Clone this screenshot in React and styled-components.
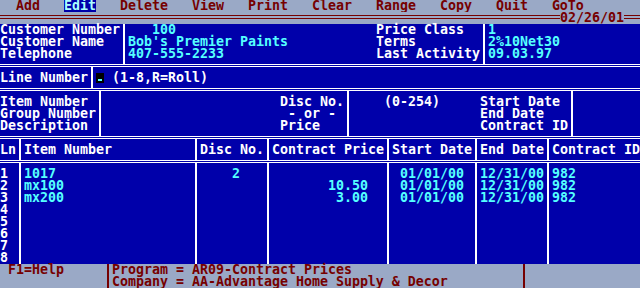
import React from 'react';
import styled, { createGlobalStyle } from 'styled-components';

const BLUE = '#0000aa';
const GRAY = '#9aa9c6';
const RED = '#760000';
const CYAN = '#55ffff';
const WHITE = '#ffffff';

const GlobalStyle = createGlobalStyle`
  html, body {
    margin: 0;
    padding: 0;
    background: ${BLUE};
  }
  * { box-sizing: border-box; }
`;

const Screen = styled.div`
  width: 640px;
  height: 288px;
  overflow: hidden;
  display: flex;
  flex-direction: column;
  background: ${BLUE};
  color: ${WHITE};
  font-family: "DejaVu Sans Mono", "Liberation Mono", monospace;
  font-weight: bold;
  font-size: 13.29px;
  line-height: 12px;
  white-space: pre;
`;

const MenuBar = styled.div`
  display: flex;
  gap: 24px;
  height: 12px;
  padding-left: 16px;
  background: ${GRAY};
  color: ${RED};
`;

const MenuItem = styled.span`
  height: 12px;
  background: ${p => (p.$active ? BLUE : 'transparent')};
  color: ${p => (p.$active ? '#aaffff' : RED)};
`;

const TitleRule = styled.div`
  display: flex;
  height: 12px;
  background: ${GRAY};
  color: ${RED};
`;

const RedLines = styled.div`
  flex: ${p => (p.$width ? 'none' : '1')};
  width: ${p => (p.$width ? `${p.$width}px` : 'auto')};
  height: 4px;
  margin-top: 3px;
  border-top: 1px solid ${RED};
  border-bottom: 1px solid ${RED};
`;

const DoubleRule = styled.div`
  height: 3px;
  flex: none;
  border-top: 1px solid ${WHITE};
  border-bottom: 1px solid ${WHITE};
`;

const Section = styled.div`
  display: flex;
  flex: none;
  --pt: ${p => p.$pt || 0}px;
  --pb: ${p => p.$pb || 0}px;
  background: ${p => p.$bg || 'transparent'};
  color: ${p => p.$fg || WHITE};
`;

const Col = styled.div`
  display: flex;
  flex-direction: column;
  flex: ${p => (p.$chars ? 'none' : '1')};
  width: ${p => (p.$chars ? `${p.$chars * 8}px` : 'auto')};
  padding: var(--pt) ${p => (p.$right || 0) * 8}px var(--pb) ${p => (p.$left || 0) * 8}px;
  color: ${p => (p.$value ? CYAN : 'inherit')};
  text-align: ${p => (p.$right ? 'right' : 'left')};
`;

const Line = styled.div`
  height: 12px;
`;

const Divider = styled.div`
  flex: none;
  width: 8px;
  background: linear-gradient(${p => p.$color || WHITE}, ${p => p.$color || WHITE}) center / 2px 100% no-repeat;
`;

const Cursor = styled.span`
  display: inline-block;
  position: relative;
  width: 8px;
  height: 10px;
  margin-top: 1px;
  vertical-align: top;
  background: #000;
  &::after {
    content: '';
    position: absolute;
    left: 2px;
    bottom: 2px;
    width: 4px;
    height: 2px;
    background: ${CYAN};
  }
`;

const menu = ['Add', 'Edit', 'Delete', 'View', 'Print', 'Clear', 'Range', 'Copy', 'Quit', 'GoTo'];

const rows = [
  { ln: '1', item: '1017', disc: '    2', price: '', start: ' 01/01/00', end: '12/31/00', id: '982' },
  { ln: '2', item: 'mx100', disc: '', price: '10.50', start: ' 01/01/00', end: '12/31/00', id: '982' },
  { ln: '3', item: 'mx200', disc: '', price: '3.00', start: ' 01/01/00', end: '12/31/00', id: '982' },
  { ln: '4' }, { ln: '5' }, { ln: '6' }, { ln: '7' }, { ln: '8' },
];

const lines = (list) => list.map((t, i) => <Line key={i}>{t || ' '}</Line>);

export default function App() {
  return (
    <Screen>
      <GlobalStyle />
      <MenuBar>
        {menu.map(m => <MenuItem key={m} $active={m === 'Edit'}>{m}</MenuItem>)}
      </MenuBar>
      <TitleRule>
        <RedLines />
        <span>02/26/01</span>
        <RedLines $width={16} />
      </TitleRule>

      <Section $pb={4}>
        <Col $chars={15}>{lines(['Customer Number', 'Customer Name', 'Telephone'])}</Col>
        <Divider />
        <Col $chars={31} $value>{lines(['   100', "Bob's Premier Paints", '407-555-2233'])}</Col>
        <Col $chars={13}>{lines(['Price Class', 'Terms', 'Last Activity'])}</Col>
        <Divider />
        <Col $value>{lines(['1', '2%10Net30', '09.03.97'])}</Col>
      </Section>
      <DoubleRule />

      <Section $pt={5} $pb={4}>
        <Col $chars={11}>{lines(['Line Number'])}</Col>
        <Divider />
        <Col><Line><Cursor /> (1-8,R=Roll)</Line></Col>
      </Section>
      <DoubleRule />

      <Section $pt={5} $pb={4}>
        <Col $chars={12}>{lines(['Item Number', 'Group Number', 'Description'])}</Col>
        <Divider />
        <Col $chars={30} $left={22}>{lines(['Disc No.', ' - or -', 'Price'])}</Col>
        <Divider />
        <Col $chars={27}>{lines(['    (0-254)     Start Date', '                End Date', '                Contract ID'])}</Col>
        <Divider />
        <Col />
      </Section>
      <DoubleRule />

      <Section $pt={5} $pb={4}>
        <Col $chars={2}>{lines(['Ln'])}</Col>
        <Divider />
        <Col $chars={21}>{lines(['Item Number'])}</Col>
        <Divider />
        <Col $chars={8}>{lines(['Disc No.'])}</Col>
        <Divider />
        <Col $chars={14}>{lines(['Contract Price'])}</Col>
        <Divider />
        <Col $chars={10}>{lines(['Start Date'])}</Col>
        <Divider />
        <Col $chars={8}>{lines(['End Date'])}</Col>
        <Divider />
        <Col>{lines(['Contract ID'])}</Col>
      </Section>
      <DoubleRule />

      <Section $pt={5}>
        <Col $chars={2}>{lines(rows.map(r => r.ln))}</Col>
        <Divider />
        <Col $chars={21} $value>{lines(rows.map(r => r.item))}</Col>
        <Divider />
        <Col $chars={8} $value>{lines(rows.map(r => r.disc))}</Col>
        <Divider />
        <Col $chars={14} $right={2} $value>{lines(rows.map(r => r.price))}</Col>
        <Divider />
        <Col $chars={10} $value>{lines(rows.map(r => r.start))}</Col>
        <Divider />
        <Col $chars={8} $value>{lines(rows.map(r => r.end))}</Col>
        <Divider />
        <Col $value>{lines(rows.map(r => r.id))}</Col>
      </Section>

      <Section $bg={GRAY} $fg={RED}>
        <Col $chars={13} $left={1}>{lines(['F1=Help', ''])}</Col>
        <Divider $color={RED} />
        <Col $chars={51}>{lines(['Program = AR09-Contract Prices', 'Company = AA-Advantage Home Supply & Decor'])}</Col>
        <Divider $color={RED} />
        <Col />
      </Section>
    </Screen>
  );
}
